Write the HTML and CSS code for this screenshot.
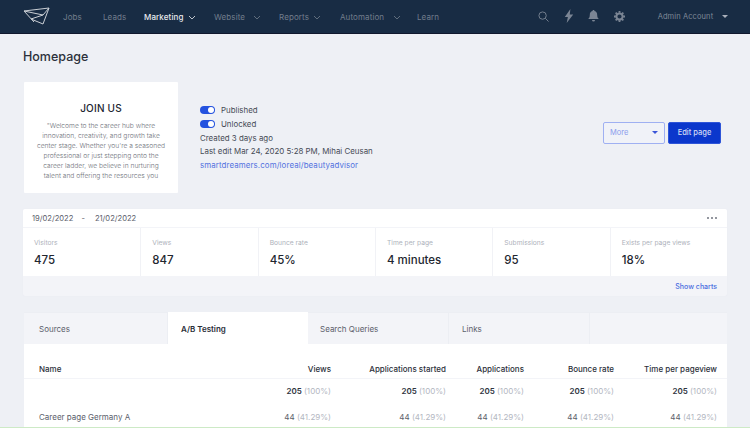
FILE: index.html
```html
<!DOCTYPE html>
<html lang="en">
<head>
<meta charset="utf-8">
<title>Homepage</title>
<link rel="stylesheet" href="styles.css">
</head>
<body>
<header class="nav">
  <svg class="logo" width="28" height="20" viewBox="0 0 28 20" fill="none" stroke="#c9ced4" stroke-width="1" stroke-linejoin="round">
    <path d="M1 5 26 2 20 18 8 13 M1 5 11 16 M1 5 20 9 26 2 M8 13 20 9"/>
  </svg>
  <nav class="menu">
    <a class="item w-jobs">Jobs</a>
    <a class="item w-leads">Leads</a>
    <a class="item w-marketing active">Marketing <svg class="chev" width="8" height="5" viewBox="0 0 8 5"><path d="M1 1l3 3 3-3"/></svg></a>
    <a class="item w-website">Website <svg class="chev gap" width="8" height="5" viewBox="0 0 8 5"><path d="M1 1l3 3 3-3"/></svg></a>
    <a class="item w-reports">Reports <svg class="chev" width="8" height="5" viewBox="0 0 8 5"><path d="M1 1l3 3 3-3"/></svg></a>
    <a class="item w-automation">Automation <svg class="chev gap" width="8" height="5" viewBox="0 0 8 5"><path d="M1 1l3 3 3-3"/></svg></a>
    <a class="item">Learn</a>
  </nav>
  <div class="tools">
    <svg width="11" height="11" viewBox="0 0 12 12" fill="none" stroke="#7b8594" stroke-width="1"><circle cx="5" cy="5" r="4"/><path d="M8 8l3.500 3.500"/></svg>
    <svg width="10" height="14" viewBox="0 0 10 15" fill="#7b8594"><path d="M6.500 0 .5 8.500h3.300L2.500 15 9.500 5.800H5.800z"/></svg>
    <svg width="11" height="12" viewBox="0 0 11 12" fill="#7b8594"><path d="M5.500 0c.6 0 1 .4 1 1 2 .5 2.700 2 2.700 4 0 2 .6 3 1.600 4H.2c1-1 1.600-2 1.600-4 0-2 .7-3.500 2.700-4 0-.6.400-1 1-1zM4 10h3a1.500 1.500 0 0 1-3 0z"/></svg>
    <svg width="11" height="11" viewBox="0 0 12 12"><circle cx="6" cy="6" r="3.400" fill="none" stroke="#7b8594" stroke-width="2.200"/><path stroke="#7b8594" stroke-width="2" d="M6 0v2M6 10v2M0 6h2M10 6h2M1.800 1.800l1.400 1.400M8.800 8.800l1.400 1.400M1.800 10.200l1.400-1.400M8.800 3.200l1.400-1.400"/></svg>
  </div>
  <div class="account">Admin Account <span class="caret light"></span></div>
</header>

<main class="page">
  <h1 class="title">Homepage</h1>

  <section class="hero">
    <div class="preview">
      <h2>JOIN US</h2>
      <p>"Welcome to the career hub where<br>innovation, creativity, and growth take<br>center stage. Whether you're a seasoned<br>professional or just stepping onto the<br>career ladder, we believe in nurturing<br>talent and offering the resources you</p>
    </div>
    <div class="info">
      <div class="line"><span class="toggle"></span>Published</div>
      <div class="line"><span class="toggle"></span>Unlocked</div>
      <div class="line">Created 3 days ago</div>
      <div class="line">Last edit Mar 24, 2020 5:28 PM, Mihai Ceusan</div>
      <a class="line link">smartdreamers.com/loreal/beautyadvisor</a>
    </div>
    <div class="actions">
      <button class="btn more">More <span class="caret blue"></span></button>
      <button class="btn edit">Edit page</button>
    </div>
  </section>

  <section class="stats">
    <div class="range">
      <span>19/02/2022</span><span class="dash">-</span><span>21/02/2022</span>
      <span class="dots"><i></i><i></i><i></i></span>
    </div>
    <div class="metrics">
      <div class="metric"><div class="label">Visitors</div><div class="value">475</div></div>
      <div class="metric"><div class="label">Views</div><div class="value">847</div></div>
      <div class="metric"><div class="label">Bounce rate</div><div class="value">45%</div></div>
      <div class="metric"><div class="label">Time per page</div><div class="value">4 minutes</div></div>
      <div class="metric"><div class="label">Submissions</div><div class="value">95</div></div>
      <div class="metric"><div class="label">Exists per page views</div><div class="value">18%</div></div>
    </div>
    <div class="charts"><a>Show charts</a></div>
  </section>

  <section class="panel">
    <div class="tabs">
      <div class="tab t1">Sources</div>
      <div class="tab t2 selected">A/B Testing</div>
      <div class="tab t3">Search Queries</div>
      <div class="tab t4">Links</div>
      <div class="tab t5"></div>
    </div>
    <div class="table">
      <div class="row head">
        <div class="name">Name</div><div>Views</div><div>Applications started</div><div>Applications</div><div>Bounce rate</div><div>Time per pageview</div>
      </div>
      <div class="row total">
        <div class="name"></div>
        <div><b>205</b> <span>(100%)</span></div>
        <div><b>205</b> <span>(100%)</span></div>
        <div><b>205</b> <span>(100%)</span></div>
        <div><b>205</b> <span>(100%)</span></div>
        <div><b>205</b> <span>(100%)</span></div>
      </div>
      <div class="row entry">
        <div class="name">Career page Germany A</div>
        <div>44 <span>(41.29%)</span></div>
        <div>44 <span>(41.29%)</span></div>
        <div>44 <span>(41.29%)</span></div>
        <div>44 <span>(41.29%)</span></div>
        <div>44 <span>(41.29%)</span></div>
      </div>
    </div>
  </section>
</main>
<div class="edge"></div>
```

FILE: styles.css
```css
* { box-sizing: border-box; }
html, body { margin: 0; height: 428px; overflow: hidden; }
body {
  background: #eef0f5;
  font-family: Inter, "Liberation Sans", sans-serif;
  color: #30353f;
  position: relative;
}
.nav {
  height: 34px;
  background: #182c44;
  border-bottom: 1px solid #10182e;
  display: flex;
  align-items: center;
  padding-left: 23px;
}
.logo { flex: none; margin-top: -2px; }
.menu {
  display: flex;
  align-items: center;
  margin-left: 12px;
  font-size: 8px;
  color: #727d8c;
  letter-spacing: .1px;
}
.item { display: block; white-space: nowrap; }
.w-jobs { width: 40px; }
.w-leads { width: 41px; }
.w-marketing { width: 70px; }
.w-website { width: 65px; }
.w-reports { width: 61px; }
.w-automation { width: 77px; }
.active { color: #e8eaee; font-weight: 500; }
.chev { fill: none; stroke: currentColor; stroke-width: .8; margin-left: 2px; }
.chev.gap { margin-left: 6px; }
.tools {
  display: flex;
  align-items: center;
  gap: 14.500px;
  margin-left: 99px;
  margin-top: -1px;
}
.account {
  margin-left: 33px;
  font-size: 7.500px;
  color: #7f8998;
  white-space: nowrap;
  letter-spacing: .1px;
}
.caret {
  display: inline-block;
  width: 0;
  height: 0;
  border-left: 3px solid transparent;
  border-right: 3px solid transparent;
  border-top: 3px solid currentColor;
  vertical-align: middle;
}
.caret.light { color: #a9b0bb; margin-left: 7px; }
.caret.blue { color: #3a55d8; }

.page { padding: 0 23px 0 24px; }
.title {
  margin: 0;
  padding-top: 15px;
  height: 48px;
  font-size: 12.500px;
  line-height: 15px;
  font-weight: 500;
  color: #2c303a;
  margin-left: -1px;
}
.hero { display: flex; align-items: center; height: 111px; }
.preview {
  width: 154px;
  height: 111px;
  background: #fff;
  border-radius: 1px;
  padding: 20px 0 0;
  text-align: center;
  overflow: hidden;
  flex: none;
}
.preview h2 {
  margin: 0 0 7px;
  font-size: 10px;
  line-height: 12px;
  font-weight: 500;
  letter-spacing: .2px;
  color: #222632;
}
.preview p {
  margin: 0;
  font-weight: 300;
  font-size: 6.700px;
  line-height: 10px;
  color: #70747c;
  white-space: nowrap;
}
.info { margin-left: 22px; }
.line {
  display: flex;
  align-items: center;
  height: 13.6px;
  font-size: 7.900px;
  color: #464b56;
  white-space: nowrap;
}
.toggle {
  width: 15px;
  height: 8px;
  border-radius: 4px;
  background: #2452df;
  margin-right: 6px;
  position: relative;
}
.toggle::after {
  content: "";
  position: absolute;
  right: 1px;
  top: 1px;
  width: 6px;
  height: 6px;
  border-radius: 50%;
  background: #fff;
}
.link { color: #5272e0; letter-spacing: .1px; }
.actions { display: flex; gap: 3px; margin-left: auto; margin-right: 6px; margin-bottom: 10px; }
.btn {
  height: 22px;
  border-radius: 2px;
  font-family: inherit;
  font-size: 7.500px;
  padding: 0;
}
.more {
  width: 62px;
  background: #f0f2f8;
  border: 1px solid #9fb0f2;
  color: #8a9cec;
  display: flex;
  align-items: center;
  justify-content: space-between;
  padding: 0 6px;
}
.edit {
  width: 53px;
  background: #0b37cc;
  border: 1px solid #2e55d8;
  color: #d5dcf5;
  font-weight: 500;
}

.stats {
  margin-top: 16px;
  margin-left: -1px;
  height: 87px;
  background: #f3f4f8;
  border-radius: 2px;
  display: flex;
  flex-direction: column;
  box-shadow: 0 0 1px #e4e6ec;
}
.range {
  height: 19px;
  background: #fff;
  border-radius: 2px 2px 0 0;
  display: flex;
  align-items: center;
  padding: 1px 10px 0 9px;
  font-size: 7.600px;
  color: #5b606b;
  border-bottom: 1px solid #f3f4f8;
}
.dash { margin: 0 10px 0 8px; }
.dots { margin-left: auto; display: flex; gap: 1.500px; margin-top: -1px; }
.dots i { width: 2.500px; height: 2.500px; border-radius: 50%; background: #70757f; }
.metrics {
  height: 48px;
  background: #fff;
  display: grid;
  grid-template-columns: repeat(6, 1fr);
}
.metric { padding: 11px 0 0 11px; border-left: 1px solid #f1f2f6; }
.metric:first-child { border-left: 0; }
.label { font-size: 6.700px; line-height: 9px; color: #aeb2bb; }
.value { margin-top: 5px; font-size: 11.500px; line-height: 15px; font-weight: 500; color: #22262f; }
.charts {
  flex: 1;
  display: flex;
  align-items: center;
  justify-content: flex-end;
  padding-right: 10px;
  font-size: 7px;
  font-weight: 500;
  color: #4a6ee0;
}

.panel { margin-top: 16px; background: #fff; height: 130px; }
.tabs {
  display: grid;
  grid-template-columns: 144px 140px 141px 141px 1fr;
  height: 32px;
  background: #f3f4f8;
}
.tab {
  display: flex;
  align-items: center;
  padding-left: 15px;
  font-size: 8px;
  color: #5b606b;
  border-right: 1px solid #eceef3;
  border-top: 1px solid #eceef3;
}
.t2 { padding-left: 13px; }
.t3 { padding-left: 12px; }
.t4 { padding-left: 13px; }
.t5 { border-right: 0; }
.selected { background: #fff; color: #2a2e38; font-weight: 600; border-color: #fff; }
.table { padding: 0 10px 0 15px; font-size: 8px; }
.row {
  display: grid;
  grid-template-columns: 177px 115px 115px 78px 90px 103px;
  text-align: right;
  white-space: nowrap;
}
.name { text-align: left; }
.head {
  height: 35px;
  padding-top: 19px;
  line-height: 12px;
  font-weight: 500;
  color: #2c303a;
  margin: 0 -10px 0 -15px;
  padding-left: 15px;
  padding-right: 10px;
  border-bottom: 1px solid #f3f4f8;
}
.total { padding-top: 6px; height: 26px; line-height: 12px; }
.total b { font-weight: 600; color: #30353f; }
.row span { color: #b3b7bf; }
.entry { padding-top: 6px; line-height: 12px; color: #5b606b; }
.edge {
  position: absolute;
  left: 0;
  right: 0;
  bottom: 0;
  height: 1px;
  background: #cdeac6;
}
```
